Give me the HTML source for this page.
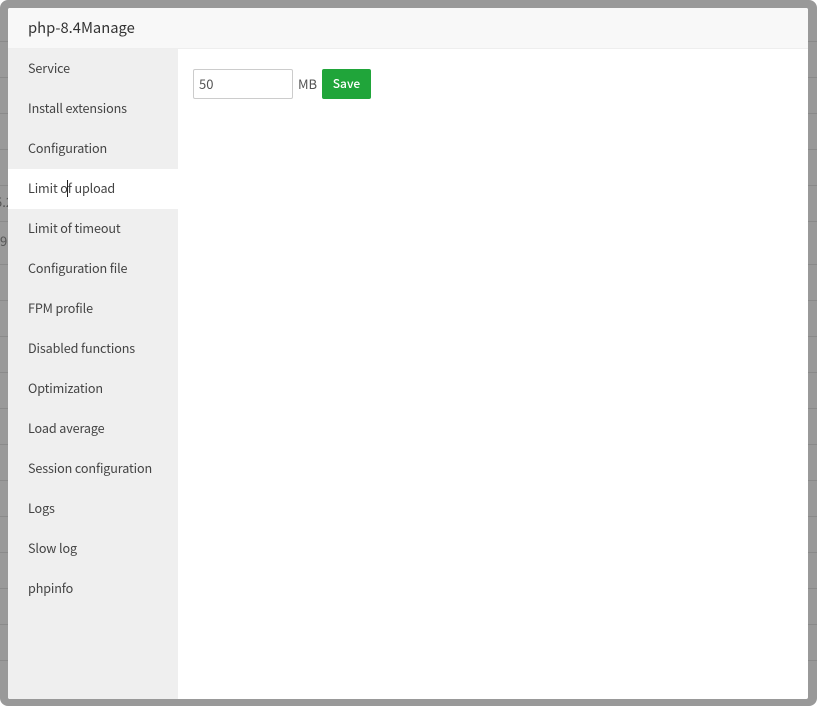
<!DOCTYPE html>
<html>
<head>
<meta charset="utf-8">
<style>
html,body{margin:0;padding:0;width:817px;height:706px;overflow:hidden;background:#fff;font-family:"Noto Sans CJK SC","Liberation Sans",sans-serif}
#ov{position:absolute;left:0;top:0;width:817px;height:706px;background:#999;border-radius:8px;overflow:hidden}
.l{position:absolute;left:0;width:817px;height:1px;background:#8a8a8a}
.b{position:absolute;left:0;color:#555;font-size:13px;line-height:16px}
#modal{position:absolute;left:8px;top:8px;width:800px;height:691px;background:#fff;overflow:hidden;border-radius:2px}
#head{position:absolute;left:0;top:0;width:800px;height:40px;background:#f8f8f8;border-bottom:1px solid #eee;color:#333;font-size:14.75px;line-height:40px;text-indent:20px}
#side{position:absolute;left:0;top:41px;width:170px;height:650px;background:#efefef}
#side div{height:40px;line-height:37px;padding-left:20px;font-size:12.6px;letter-spacing:-.12px;color:#444;white-space:nowrap;box-sizing:border-box}
#side div.on{background:#fff}
#caret{position:absolute;left:59px;top:172px;width:1px;height:17px;background:#222}
#inp{position:absolute;left:185px;top:61px;width:100px;height:30px;box-sizing:border-box;border:1px solid #ccc;border-radius:2px;font-size:13px;line-height:28px;padding-left:5px;color:#555;background:#fff}
#mb{position:absolute;left:290px;top:61px;line-height:30px;font-size:13px;color:#555}
#save{position:absolute;left:314px;top:61px;width:49px;height:30px;background:#20a53a;border-radius:2px;color:#fff;font-size:12px;font-weight:500;line-height:30px;text-align:center}
</style>
</head>
<body>
<div id="ov">
<div class="l" style="top:41px"></div>
<div class="l" style="top:77px"></div>
<div class="l" style="top:113px"></div>
<div class="l" style="top:149px"></div>
<div class="l" style="top:185px"></div>
<div class="l" style="top:221px"></div>
<div class="l" style="top:264px"></div>
<div class="l" style="top:300px"></div>
<div class="l" style="top:336px"></div>
<div class="l" style="top:372px"></div>
<div class="l" style="top:408px"></div>
<div class="l" style="top:444px"></div>
<div class="l" style="top:480px"></div>
<div class="l" style="top:516px"></div>
<div class="l" style="top:552px"></div>
<div class="l" style="top:588px"></div>
<div class="l" style="top:624px"></div>
<div class="l" style="top:660px"></div>
<div class="b" style="top:194px;left:-5px">5.2</div>
<div class="b" style="top:233px;left:0">9</div>
<div id="modal">
<div id="head">php-8.4Manage</div>
<div id="side">
<div>Service</div>
<div>Install extensions</div>
<div>Configuration</div>
<div class="on">Limit of upload</div>
<div>Limit of timeout</div>
<div>Configuration file</div>
<div>FPM profile</div>
<div>Disabled functions</div>
<div>Optimization</div>
<div>Load average</div>
<div>Session configuration</div>
<div>Logs</div>
<div>Slow log</div>
<div>phpinfo</div>
</div>
<div id="caret"></div>
<div id="inp">50</div>
<div id="mb">MB</div>
<div id="save">Save</div>
</div>
</div>
</body>
</html>
